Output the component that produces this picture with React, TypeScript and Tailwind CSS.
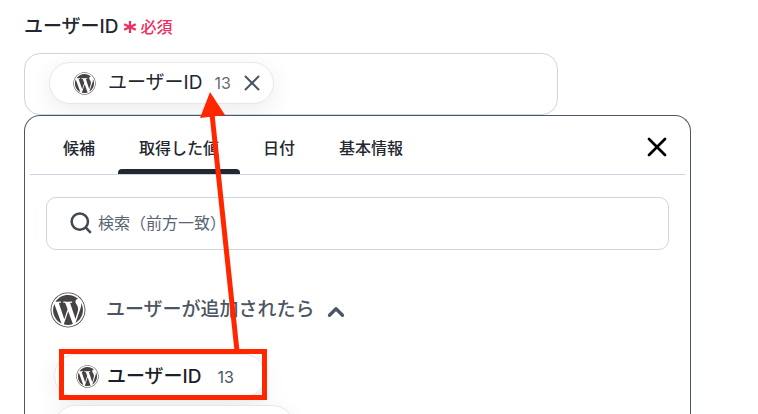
import { useState } from 'react';
import { ChevronUp, X } from 'lucide-react';
import { FaWordpress } from 'react-icons/fa';

const TABS = ['候補', '取得した値', '日付', '基本情報'];

function RequiredMark() {
  return (
    <svg width="14" height="14" viewBox="0 0 14 14" stroke="currentColor" strokeWidth="2.2" aria-hidden="true">
      <path d="M7 1V13M1.2 4.2L12.8 9.8M12.8 4.2L1.2 9.8" />
    </svg>
  );
}

function SearchIcon() {
  return (
    <svg width="22" height="22" viewBox="0 0 22 22" fill="none" stroke="#414853" strokeWidth="2.5" aria-hidden="true">
      <circle cx="9.8" cy="9.6" r="8.2" />
      <path d="M15.6 15.4L20.8 20.8" />
    </svg>
  );
}

function Arrow() {
  return (
    <svg
      className="absolute top-0 left-0 pointer-events-none"
      width="280"
      height="360"
      fill="#ff2600"
      aria-hidden="true"
    >
      <path d="M237 351L212 114" stroke="#ff2600" strokeWidth="5" />
      <path d="M210 92L200 118L225 115Z" />
    </svg>
  );
}

export default function App() {
  const [tab, setTab] = useState('取得した値');
  const [selected, setSelected] = useState(true);
  const [open, setOpen] = useState(true);
  const [query, setQuery] = useState('');

  return (
    <main className="relative flex flex-col h-screen overflow-hidden bg-white pl-6 pr-[67px] pt-3 font-['Inter','Noto_Sans_CJK_JP',sans-serif] text-[#23272f]">
      <div className="flex items-center h-[30px] mb-[11px] shrink-0">
        <span className="text-[19px] font-medium">ユーザーID</span>
        <span className="flex items-center gap-1 ml-1 text-base font-medium text-[#f02d5e]">
          <RequiredMark />
          必須
        </span>
      </div>

      <div className="flex items-center w-4/5 h-[62px] shrink-0 pl-6 pb-0.5 border border-[#cbd5e1] rounded-2xl overflow-hidden">
        {selected && (
          <div className="flex items-center h-[42px] pl-[23px] pr-2 bg-white border border-[#e5e7eb] rounded-full shadow-[0_6px_24px_rgba(0,0,0,0.08)]">
            <FaWordpress size={23} className="text-[#464342]" />
            <span className="ml-3 text-[19px]">ユーザーID</span>
            <span className="ml-3 text-base text-[#6b6b6b]">13</span>
            <button
              aria-label="削除"
              onClick={() => setSelected(false)}
              className="ml-2 text-[#4b5563] cursor-pointer"
            >
              <X size={26} strokeWidth={1.8} />
            </button>
          </div>
        )}
      </div>

      <section className="flex-1 px-[5px] bg-white border border-b-0 border-[#4b5563] rounded-t-2xl overflow-hidden">
        <div className="flex items-stretch gap-0.5 h-[59px] px-3 border-b border-[#cbd5e1]">
          {TABS.map(name => (
            <button
              key={name}
              onClick={() => setTab(name)}
              className="relative px-[21px] pb-1 pt-2.5 text-base font-medium cursor-pointer"
            >
              {name}
              {tab === name && (
                <span className="absolute inset-x-0 bottom-0 h-[5px] bg-[#23272f] rounded-t" />
              )}
            </button>
          ))}
          <button aria-label="閉じる" className="ml-auto mt-1 text-black cursor-pointer">
            <X size={32} strokeWidth={2} />
          </button>
        </div>

        <div className="px-4 pt-[22px]">
          <label className="flex items-center h-[53px] pl-[23px] pb-0.5 border border-[#cbd5e1] rounded-[10px]">
            <SearchIcon />
            <input
              type="text"
              aria-label="検索"
              value={query}
              onChange={(e) => setQuery(e.target.value)}
              placeholder="検索（前方一致）"
              className="flex-1 ml-1.5 text-base outline-none placeholder:text-[#5b6472]"
            />
          </label>

          <button
            onClick={() => setOpen(!open)}
            className="flex items-center h-9 mt-[42px] ml-1 text-[#4b5563] cursor-pointer"
          >
            <FaWordpress size={36} className="text-[#464342]" />
            <span className="ml-5 text-[19px] font-medium">ユーザーが追加されたら</span>
            <ChevronUp size={26} strokeWidth={3} className="ml-2 mt-1" />
          </button>

          {open && (
            <div className="flex flex-col items-start gap-2 mt-[26px] ml-2">
              <button
                onClick={() => setSelected(true)}
                className="relative flex items-center w-[212px] h-[43px] pl-[21px] pt-0.5 bg-white border border-[#e5e7eb] rounded-full shadow-[0_6px_24px_rgba(0,0,0,0.08)] cursor-pointer"
              >
                <FaWordpress size={23} className="text-[#464342]" />
                <span className="ml-2 pt-0.5 text-[19px] font-medium text-[#1b1f26]">ユーザーID</span>
                <span className="ml-4 text-base text-[#4b5563]">13</span>
                <span className="absolute -top-[6px] left-1 w-[208px] h-[51px] border-5 border-[#ff2600]" />
              </button>
              <div className="relative w-[240px] h-[43px] bg-white border border-[#e5e7eb] rounded-full shadow-[0_6px_24px_rgba(0,0,0,0.08)]" />
            </div>
          )}
        </div>
      </section>

      <Arrow />
    </main>
  );
}
